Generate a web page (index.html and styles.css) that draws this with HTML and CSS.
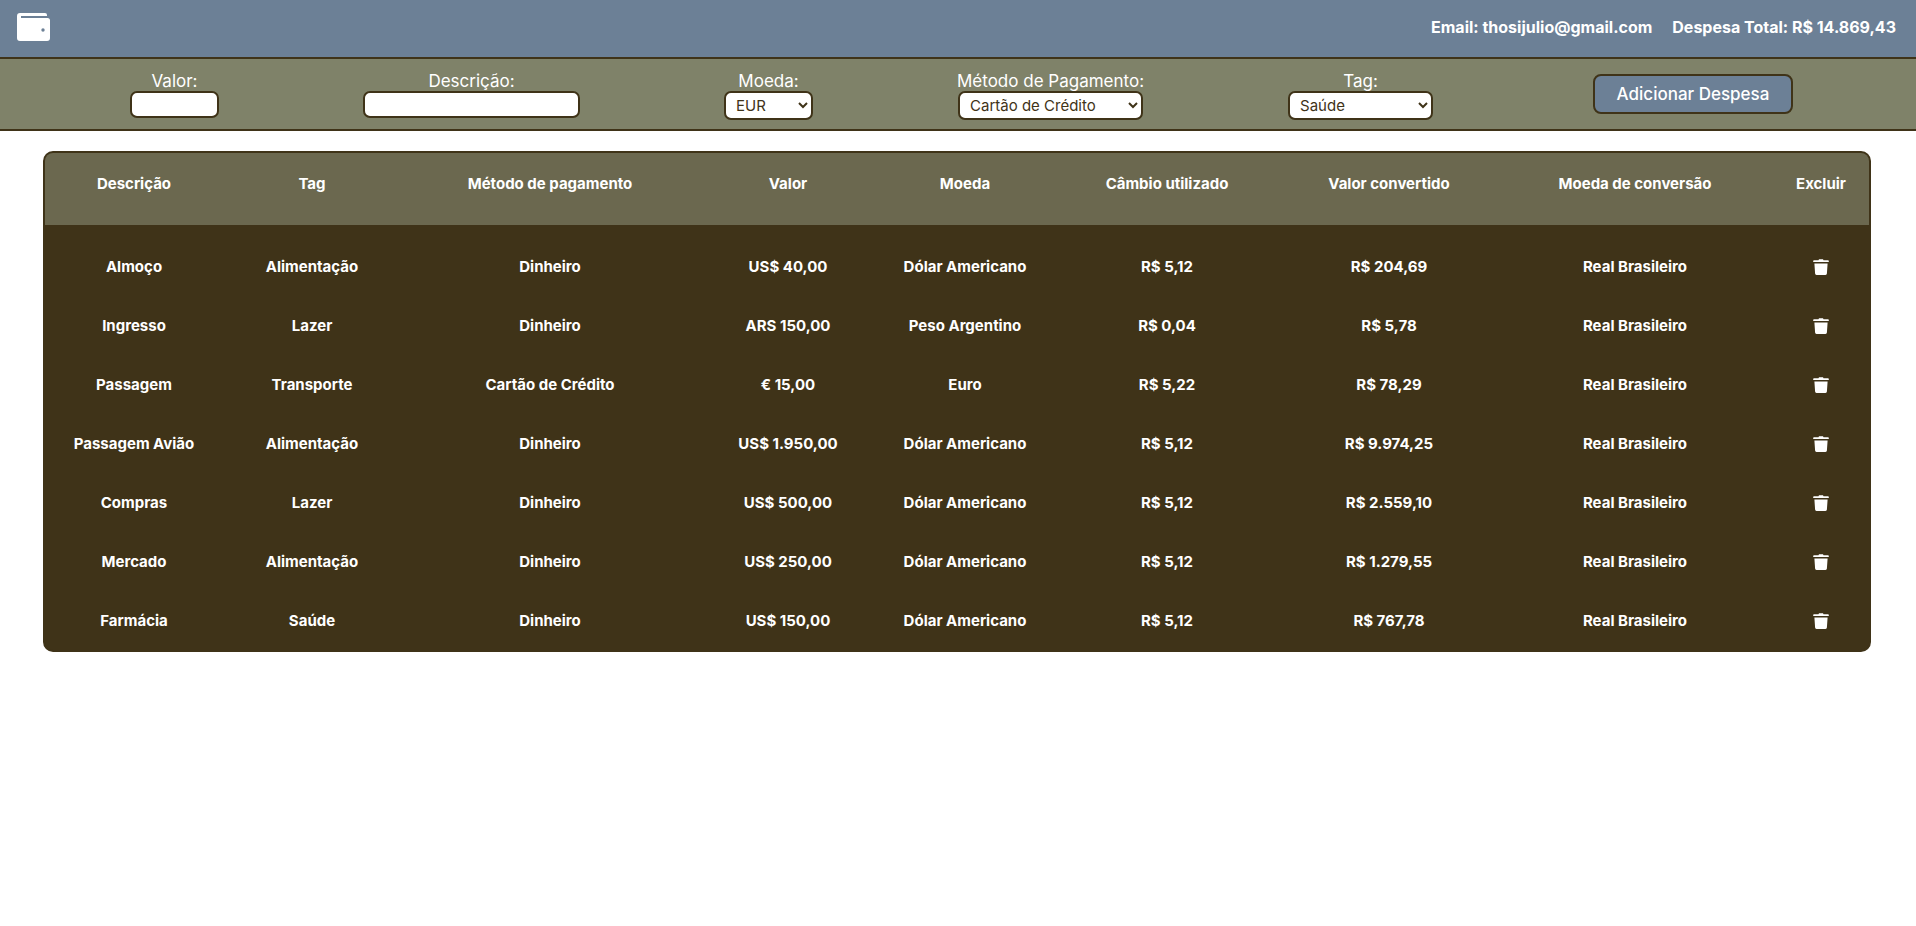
FILE: index.html
```html
<!DOCTYPE html>
<html lang="pt-BR">
<head>
  <meta charset="UTF-8" />
  <title>Carteira</title>
  <link rel="stylesheet" href="styles.css">
</head>
<body>
  <header class="topo">
    <svg class="logo" viewBox="0 0 33 28" width="33" height="28">
      <path d="M3 0h25a2 2 0 0 1 2 2v3h0.5a2.5 2.5 0 0 1 2.5 2.5V25a3 3 0 0 1-3 3H3a3 3 0 0 1-3-3V3a3 3 0 0 1 3-3z" fill="#fff"/>
      <rect x="4" y="3" width="26" height="2" fill="#6c8096"/>
      <circle cx="26" cy="17" r="1.7" fill="#6c8096"/>
    </svg>
    <div class="info">
      <span>Email: thosijulio@gmail.com</span>
      <span>Despesa Total: R$ 14.869,43</span>
    </div>
  </header>

  <form class="form-despesa">
    <label class="campo">Valor:
      <input class="inp-valor" type="text">
    </label>
    <label class="campo">Descrição:
      <input class="inp-desc" type="text">
    </label>
    <label class="campo">Moeda:
      <select class="sel-moeda"><option>EUR</option></select>
    </label>
    <label class="campo">Método de Pagamento:
      <select class="sel-metodo"><option>Cartão de Crédito</option></select>
    </label>
    <label class="campo">Tag:
      <select class="sel-tag"><option>Saúde</option></select>
    </label>
    <button class="btn-add" type="button">Adicionar Despesa</button>
  </form>

  <main class="conteudo">
    <table class="tabela">
      <colgroup>
        <col class="c178"><col class="c178"><col class="c298"><col class="c178"><col class="c176"><col class="c228"><col class="c216"><col class="c276"><col class="c96">
      </colgroup>
      <thead>
        <tr>
          <th>Descrição</th><th>Tag</th><th>Método de pagamento</th><th>Valor</th><th>Moeda</th><th>Câmbio utilizado</th><th>Valor convertido</th><th>Moeda de conversão</th><th>Excluir</th>
        </tr>
      </thead>
      <tbody>
        <tr><td>Almoço</td><td>Alimentação</td><td>Dinheiro</td><td>US$ 40,00</td><td>Dólar Americano</td><td>R$ 5,12</td><td>R$ 204,69</td><td>Real Brasileiro</td><td><svg class="lixo" viewBox="0 0 16 16" width="16" height="16"><path d="M5.5 1.2 6 .3h4l.5.9H15a.8.8 0 0 1 .8.8v1H.2V2A.8.8 0 0 1 1 1.2zM1.4 4.4h13.2l-.7 10.2a1.4 1.4 0 0 1-1.4 1.4H3.5a1.4 1.4 0 0 1-1.4-1.4z" fill="#fff"/></svg></td></tr>
        <tr><td>Ingresso</td><td>Lazer</td><td>Dinheiro</td><td>ARS 150,00</td><td>Peso Argentino</td><td>R$ 0,04</td><td>R$ 5,78</td><td>Real Brasileiro</td><td><svg class="lixo" viewBox="0 0 16 16" width="16" height="16"><path d="M5.5 1.2 6 .3h4l.5.9H15a.8.8 0 0 1 .8.8v1H.2V2A.8.8 0 0 1 1 1.2zM1.4 4.4h13.2l-.7 10.2a1.4 1.4 0 0 1-1.4 1.4H3.5a1.4 1.4 0 0 1-1.4-1.4z" fill="#fff"/></svg></td></tr>
        <tr><td>Passagem</td><td>Transporte</td><td>Cartão de Crédito</td><td>€ 15,00</td><td>Euro</td><td>R$ 5,22</td><td>R$ 78,29</td><td>Real Brasileiro</td><td><svg class="lixo" viewBox="0 0 16 16" width="16" height="16"><path d="M5.5 1.2 6 .3h4l.5.9H15a.8.8 0 0 1 .8.8v1H.2V2A.8.8 0 0 1 1 1.2zM1.4 4.4h13.2l-.7 10.2a1.4 1.4 0 0 1-1.4 1.4H3.5a1.4 1.4 0 0 1-1.4-1.4z" fill="#fff"/></svg></td></tr>
        <tr><td>Passagem Avião</td><td>Alimentação</td><td>Dinheiro</td><td>US$ 1.950,00</td><td>Dólar Americano</td><td>R$ 5,12</td><td>R$ 9.974,25</td><td>Real Brasileiro</td><td><svg class="lixo" viewBox="0 0 16 16" width="16" height="16"><path d="M5.5 1.2 6 .3h4l.5.9H15a.8.8 0 0 1 .8.8v1H.2V2A.8.8 0 0 1 1 1.2zM1.4 4.4h13.2l-.7 10.2a1.4 1.4 0 0 1-1.4 1.4H3.5a1.4 1.4 0 0 1-1.4-1.4z" fill="#fff"/></svg></td></tr>
        <tr><td>Compras</td><td>Lazer</td><td>Dinheiro</td><td>US$ 500,00</td><td>Dólar Americano</td><td>R$ 5,12</td><td>R$ 2.559,10</td><td>Real Brasileiro</td><td><svg class="lixo" viewBox="0 0 16 16" width="16" height="16"><path d="M5.5 1.2 6 .3h4l.5.9H15a.8.8 0 0 1 .8.8v1H.2V2A.8.8 0 0 1 1 1.2zM1.4 4.4h13.2l-.7 10.2a1.4 1.4 0 0 1-1.4 1.4H3.5a1.4 1.4 0 0 1-1.4-1.4z" fill="#fff"/></svg></td></tr>
        <tr><td>Mercado</td><td>Alimentação</td><td>Dinheiro</td><td>US$ 250,00</td><td>Dólar Americano</td><td>R$ 5,12</td><td>R$ 1.279,55</td><td>Real Brasileiro</td><td><svg class="lixo" viewBox="0 0 16 16" width="16" height="16"><path d="M5.5 1.2 6 .3h4l.5.9H15a.8.8 0 0 1 .8.8v1H.2V2A.8.8 0 0 1 1 1.2zM1.4 4.4h13.2l-.7 10.2a1.4 1.4 0 0 1-1.4 1.4H3.5a1.4 1.4 0 0 1-1.4-1.4z" fill="#fff"/></svg></td></tr>
        <tr><td>Farmácia</td><td>Saúde</td><td>Dinheiro</td><td>US$ 150,00</td><td>Dólar Americano</td><td>R$ 5,12</td><td>R$ 767,78</td><td>Real Brasileiro</td><td><svg class="lixo" viewBox="0 0 16 16" width="16" height="16"><path d="M5.5 1.2 6 .3h4l.5.9H15a.8.8 0 0 1 .8.8v1H.2V2A.8.8 0 0 1 1 1.2zM1.4 4.4h13.2l-.7 10.2a1.4 1.4 0 0 1-1.4 1.4H3.5a1.4 1.4 0 0 1-1.4-1.4z" fill="#fff"/></svg></td></tr>
      </tbody>
    </table>
  </main>
</body>
</html>
```

FILE: styles.css
```css
* { box-sizing: border-box; }
body {
  margin: 0;
  background: #fff;
  color: #fff;
  font-family: Inter, "Noto Sans", sans-serif;
}
.topo {
  display: flex;
  align-items: flex-start;
  justify-content: space-between;
  height: 59px;
  padding: 13px 20px 0 17px;
  background: #6c8096;
  border-bottom: 2px solid #3f3318;
}
.logo { display: block; }
.info {
  display: flex;
  gap: 20px;
  font-size: 16px;
  font-weight: 700;
  line-height: 28px;
}
.form-despesa {
  display: flex;
  align-items: flex-start;
  gap: 144px;
  height: 72px;
  padding: 12px 123px 0 130px;
  background: #7f8269;
  border-bottom: 2px solid #3f3318;
}
.campo {
  display: flex;
  flex-direction: column;
  align-items: center;
  font-size: 17px;
  line-height: 20px;
}
.campo input, .campo select {
  height: 27px;
  border: 2px solid #3f3318;
  border-radius: 7px;
  background: #fff;
  color: #3f3318;
  font-family: inherit;
  font-size: 15px;
}
.campo select { height: 29px; padding: 0 6px; }
.inp-valor { width: 89px; }
.inp-desc { width: 217px; }
.sel-moeda { width: 89px; }
.sel-metodo { width: 185px; }
.sel-tag { width: 145px; }
.btn-add {
  width: 200px;
  height: 40px;
  margin: 3px 0 0 auto;
  border: 2px solid #3f3318;
  border-radius: 8px;
  background: #6c8096;
  color: #fff;
  font-family: inherit;
  font-size: 17px;
  font-weight: 500;
}
.conteudo { padding: 20px 45px 0 43px; }
.tabela {
  width: 100%;
  table-layout: fixed;
  border-collapse: separate;
  border-spacing: 0;
  border: 2px solid #3f3318;
  border-radius: 10px;
  overflow: hidden;
  background: #3f3318;
  font-size: 15px;
  font-weight: 700;
  text-align: center;
}
.c178 { width: 178px; }
.c176 { width: 176px; }
.c298 { width: 298px; }
.c228 { width: 228px; }
.c216 { width: 216px; }
.c276 { width: 276px; }
.c96 { width: 96px; }
th {
  height: 72px;
  padding: 0 0 12px;
  background: #6b684f;
  font-weight: 700;
}
td { height: 59px; padding: 0; }
tbody tr:first-child td { height: 71px; padding-top: 12px; }
.lixo { display: block; margin: 0 auto; }
```
